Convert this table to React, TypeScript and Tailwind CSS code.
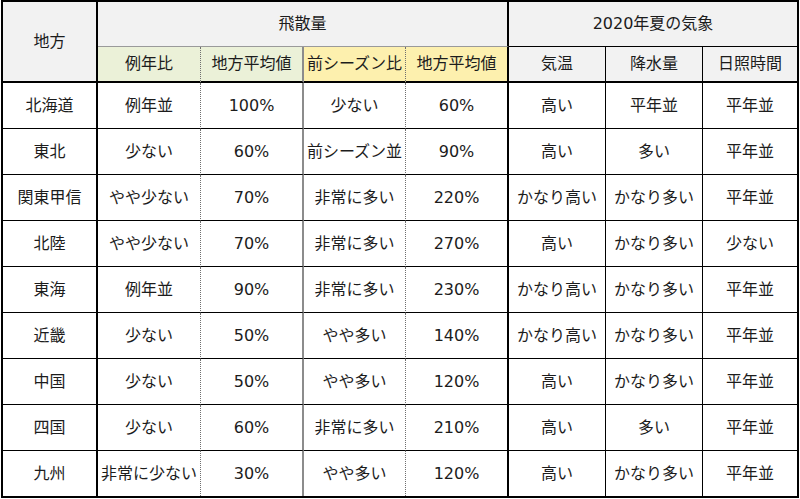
const rows = [
  ['北海道', '例年並', '100%', '少ない', '60%', '高い', '平年並', '平年並'],
  ['東北', '少ない', '60%', '前シーズン並', '90%', '高い', '多い', '平年並'],
  ['関東甲信', 'やや少ない', '70%', '非常に多い', '220%', 'かなり高い', 'かなり多い', '平年並'],
  ['北陸', 'やや少ない', '70%', '非常に多い', '270%', '高い', 'かなり多い', '少ない'],
  ['東海', '例年並', '90%', '非常に多い', '230%', 'かなり高い', 'かなり多い', '平年並'],
  ['近畿', '少ない', '50%', 'やや多い', '140%', 'かなり高い', 'かなり多い', '平年並'],
  ['中国', '少ない', '50%', 'やや多い', '120%', '高い', 'かなり多い', '平年並'],
  ['四国', '少ない', '60%', '非常に多い', '210%', '高い', '多い', '平年並'],
  ['九州', '非常に少ない', '30%', 'やや多い', '120%', '高い', 'かなり多い', '平年並'],
];

// right border of each column
const colRight = [
  'border-r-2 border-r-black',
  'border-r [border-right-style:dotted] border-r-[#6f6f6f]',
  'border-r-2 border-r-[#8c8c8c]',
  'border-r [border-right-style:dotted] border-r-[#6f6f6f]',
  'border-r-2 border-r-black',
  'border-r border-r-black',
  'border-r border-r-black',
  '',
];

const cell = 'flex items-center justify-center whitespace-nowrap';

export default function App() {
  return (
    <div className="w-[800px] h-[499px] bg-white pl-[1px]">
      <div
        className="w-[798px] border-2 border-black grid grid-cols-[95px_103px_103px_102px_103px_97px_97px_94px] grid-rows-[45px_36px_repeat(8,46px)_45px] text-[16px] text-[#1c1c1c]"
        style={{ fontFamily: '"DejaVu Sans", "Noto Sans CJK JP", sans-serif' }}
      >
        <div className={`${cell} row-span-2 bg-[#f2f2f2] border-r-2 border-r-black border-b-2 border-b-black`}>地方</div>
        <div className={`${cell} col-span-4 bg-[#f2f2f2] border-r-2 border-r-black border-b border-b-[#9a9a9a]`}>飛散量</div>
        <div className={`${cell} col-span-3 bg-[#f2f2f2] border-b border-b-black`}>2020年夏の気象</div>

        <div className={`${cell} bg-[#ebf1d8] border-b-2 border-b-black ${colRight[1]}`}>例年比</div>
        <div className={`${cell} bg-[#ebf1d8] border-b-2 border-b-black ${colRight[2]}`}>地方平均値</div>
        <div className={`${cell} bg-[#fdf0ae] border-b-2 border-b-black ${colRight[3]}`}>前シーズン比</div>
        <div className={`${cell} bg-[#fdf0ae] border-b-2 border-b-black ${colRight[4]}`}>地方平均値</div>
        <div className={`${cell} bg-[#f2f2f2] border-b-2 border-b-black ${colRight[5]}`}>気温</div>
        <div className={`${cell} bg-[#f2f2f2] border-b-2 border-b-black ${colRight[6]}`}>降水量</div>
        <div className={`${cell} bg-[#f2f2f2] border-b-2 border-b-black ${colRight[7]}`}>日照時間</div>

        {rows.map((r, ri) =>
          r.map((c, ci) => (
            <div
              key={`${ri}-${ci}`}
              className={`${cell} ${colRight[ci]} ${ri < rows.length - 1 ? 'border-b border-b-black' : ''}`}
            >
              {c}
            </div>
          ))
        )}
      </div>
    </div>
  );
}
